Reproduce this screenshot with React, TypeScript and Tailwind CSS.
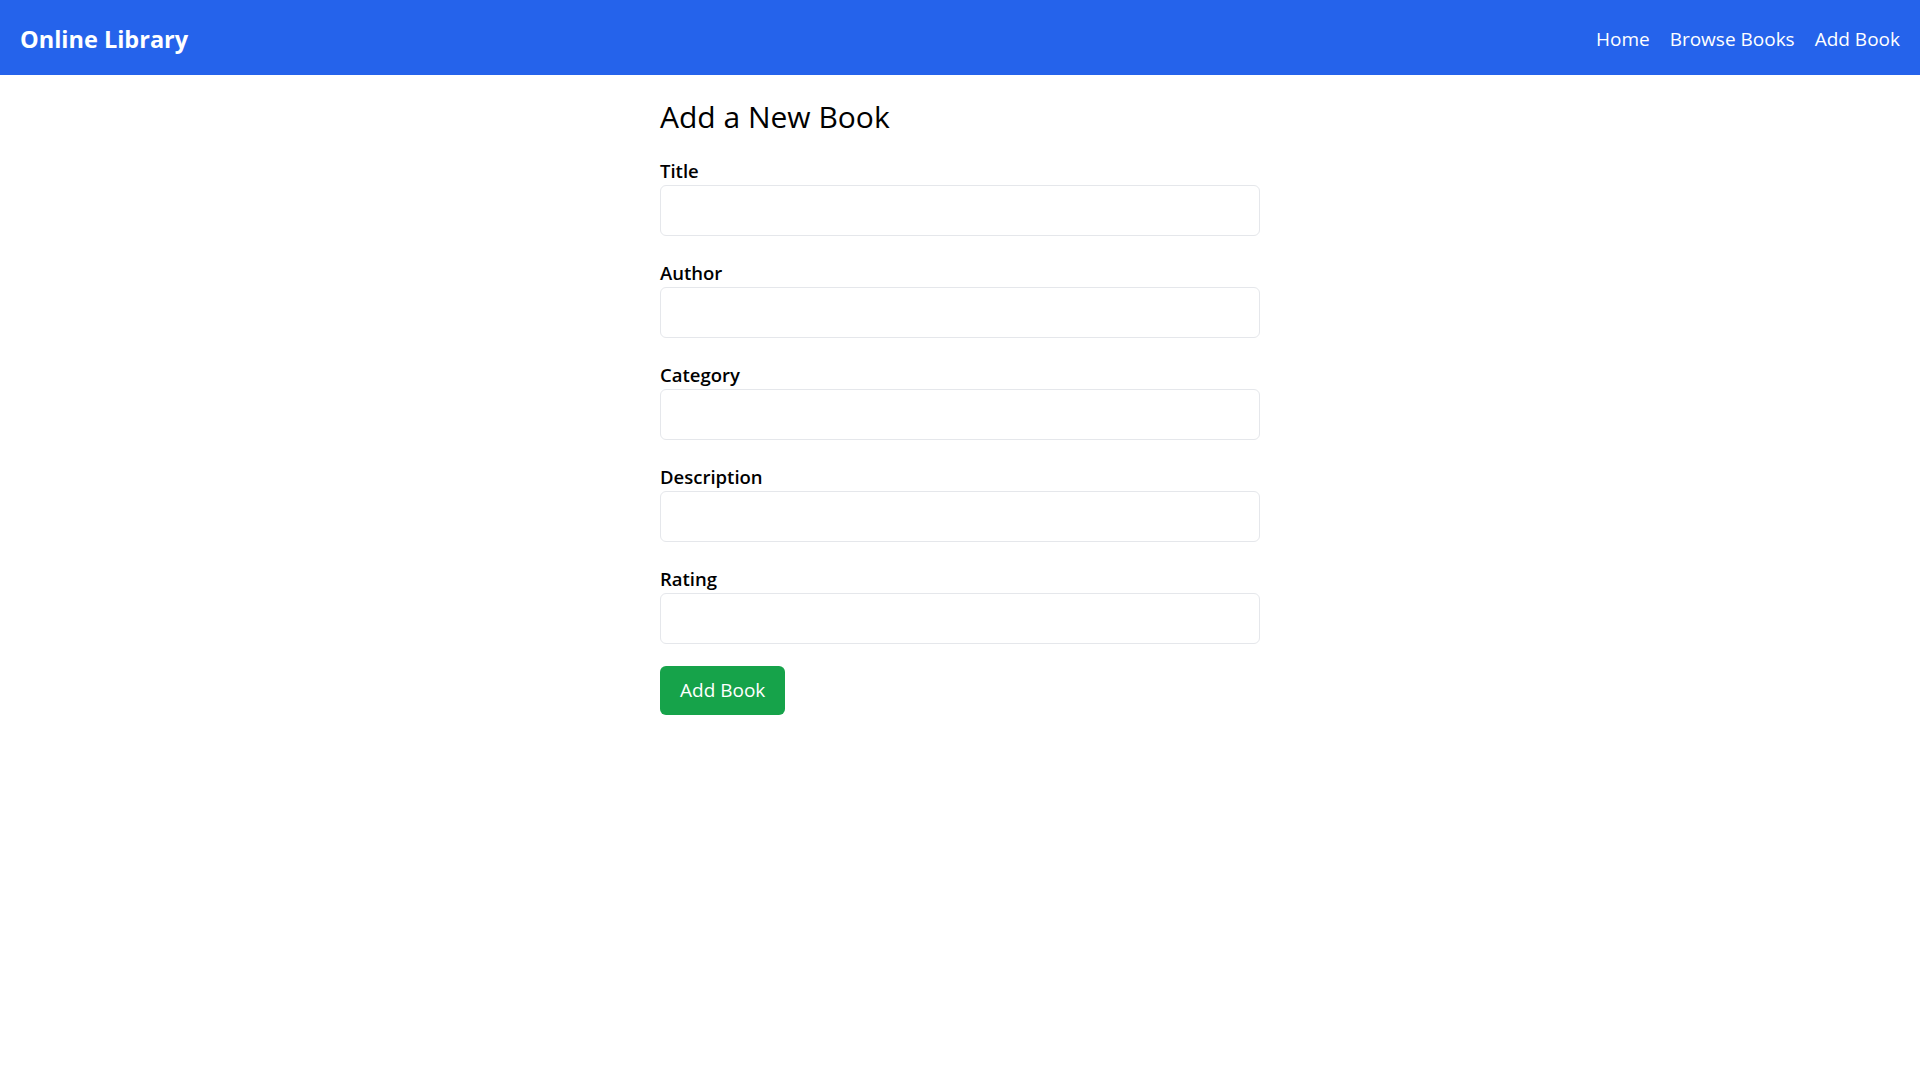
import React from "react";

const fields = ["Title", "Author", "Category", "Description", "Rating"];

const NavLink = ({ label }: { label: string }) => (
  <a href="#" className="text-white text-[19px]">
    {label}
  </a>
);

export default function App() {
  return (
    <div
      className="min-h-screen bg-white text-black"
      style={{ fontFamily: '"Open Sans", "Noto Sans", sans-serif' }}
    >
      {/* Top bar */}
      <header className="h-[75px] bg-[#2563eb] px-5 pt-1 flex items-center justify-between">
        <h1 className="text-white text-[23.5px] font-bold">Online Library</h1>
        <nav className="flex items-center gap-5">
          <NavLink label="Home" />
          <NavLink label="Browse Books" />
          <NavLink label="Add Book" />
        </nav>
      </header>

      {/* Form */}
      <main className="w-[600px] mx-auto pt-6">
        <h2 className="text-3xl mb-[21px]">Add a New Book</h2>
        <form onSubmit={(e) => e.preventDefault()}>
          {fields.map((f) => (
            <div key={f} className="mb-[22px]">
              <label className="block text-[18.5px] font-semibold leading-[29px]">{f}</label>
              <input
                type="text"
                className="block w-full h-[51px] border border-[#e5e7eb] rounded-md px-3"
              />
            </div>
          ))}
          <button
            type="submit"
            className="h-[49px] px-5 bg-[#16a34a] text-white text-[19px] rounded-md"
          >
            Add Book
          </button>
        </form>
      </main>
    </div>
  );
}
